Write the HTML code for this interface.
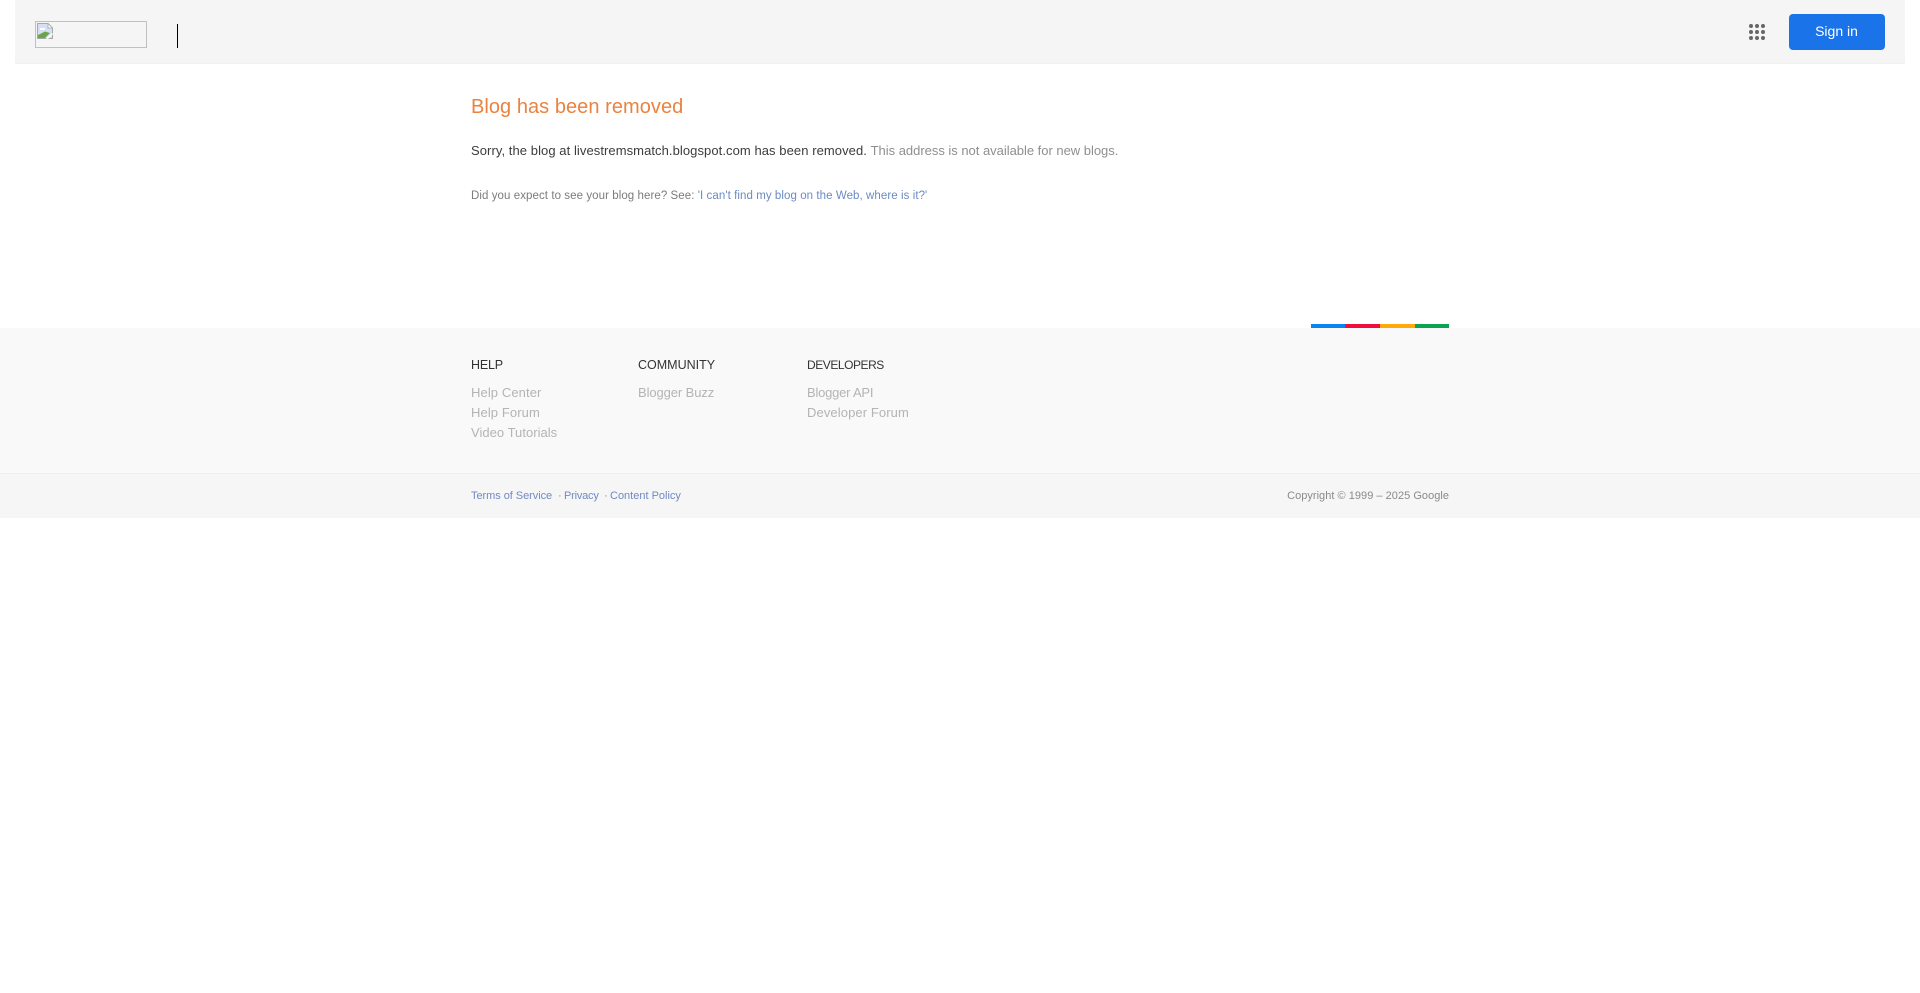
<!DOCTYPE html>
<html><head><meta charset="utf-8"><title>Blog has been removed</title>
<style>
html,body{margin:0;padding:0;background:#fff;width:1920px;height:993px;overflow:hidden}
body{font-family:"Liberation Sans",sans-serif;position:relative}
.b{position:absolute}
.t{position:absolute;white-space:pre;line-height:20px;height:20px}
.t a{color:inherit;text-decoration:none}
.h{font-size:12.500px;color:#333;top:355px}
.l{font-size:13px;color:#b4b4b4}
.s{font-size:11px;top:486px;color:#6f8ac4}
</style></head><body>
<div class="b" style="left:15px;top:0;width:1890px;height:63px;background:#f5f5f5;border-bottom:1px solid #f0f0f0"></div>
<div class="b" style="left:35px;top:21px;width:110px;height:25px;border:1px solid #c0c0c0"></div>
<svg class="b" style="left:37px;top:23px" width="16" height="16" viewBox="0 0 16 16">
<path d="M0.5 .5H11L15.5 5V15.5H.5Z" fill="#d5e0f5" stroke="#a8a8a8" stroke-width="1"/>
<path d="M11 .5V5H15.5Z" fill="#fff" stroke="#a8a8a8" stroke-width=".8"/>
<path d="M1 15V12L8 8.500L13 10L8 15Z" fill="#6aa548"/>
<path d="M9 15.500L15 10L16 11L11 16Z" fill="#fff"/>
<path d="M3 5h5v2h-5z" fill="#fff"/>
</svg>
<div class="b" style="left:177px;top:24px;width:1px;height:24px;background:#000"></div>
<svg class="b" style="left:1749px;top:24px" width="16" height="16" viewBox="0 0 16 16" fill="#666">
<circle cx="2" cy="2" r="2"/><circle cx="8" cy="2" r="2"/><circle cx="14" cy="2" r="2"/>
<circle cx="2" cy="8" r="2"/><circle cx="8" cy="8" r="2"/><circle cx="14" cy="8" r="2"/>
<circle cx="2" cy="14" r="2"/><circle cx="8" cy="14" r="2"/><circle cx="14" cy="14" r="2"/>
</svg>
<div class="b" style="left:1789px;top:14px;width:96px;height:36px;background:#1a73e8;border-radius:4px;color:#fff;font-size:14px;line-height:35px;text-align:center;text-indent:-1px">Sign in</div>

<div class="t" style="left:471px;top:96px;font-size:20px;line-height:22px;height:24px;color:#ea8340;letter-spacing:.05px">Blog has been removed</div>
<div class="t" style="left:471px;top:141px;font-size:13px;color:#3c3c3c;letter-spacing:.07px">Sorry, the blog at livestremsmatch.blogspot.com has been removed. <span style="color:#8f8f8f;letter-spacing:-.02px">This address is not available for new blogs.</span></div>
<div class="t" style="left:471px;top:186px;font-size:11.500px;color:#7c7c7c;letter-spacing:.07px">Did you expect to see your blog here? See: <a style="color:#6a8bc2" href="#">'I can't find my blog on the Web, where is it?'</a></div>

<div class="b" style="left:0;top:328px;width:1920px;height:145px;background:#f9f9f9"></div>
<div class="b" style="left:1311px;top:324px;width:34px;height:4px;background:#0a84f0"></div>
<div class="b" style="left:1345px;top:324px;width:35px;height:4px;background:#f00f3c"></div>
<div class="b" style="left:1380px;top:324px;width:35px;height:4px;background:#ffa90a"></div>
<div class="b" style="left:1415px;top:324px;width:34px;height:4px;background:#0ba34f"></div>

<div class="t h" style="left:471px;letter-spacing:-.2px">HELP</div>
<div class="t h" style="left:638px">COMMUNITY</div>
<div class="t h" style="left:807px;font-size:12px;letter-spacing:-.45px">DEVELOPERS</div>
<div class="t l" style="left:471px;top:383px;letter-spacing:.1px">Help Center</div>
<div class="t l" style="left:471px;top:403px;letter-spacing:.1px">Help Forum</div>
<div class="t l" style="left:471px;top:423px;letter-spacing:.03px">Video Tutorials</div>
<div class="t l" style="left:638px;top:383px;letter-spacing:-.1px">Blogger Buzz</div>
<div class="t l" style="left:807px;top:383px;letter-spacing:-.22px">Blogger API</div>
<div class="t l" style="left:807px;top:403px;letter-spacing:.1px">Developer Forum</div>

<div class="b" style="left:0;top:473px;width:1920px;height:44px;background:#f6f6f6;border-top:1px solid #eeeeee"></div>
<div class="t s" style="left:471px;letter-spacing:-.05px">Terms of Service</div>
<div class="t s" style="left:558px;color:#888">·</div>
<div class="t s" style="left:564px;letter-spacing:-.2px">Privacy</div>
<div class="t s" style="left:604px;color:#888">·</div>
<div class="t s" style="left:610px">Content Policy</div>
<div class="t s" style="right:471px;color:#8a8a8a;letter-spacing:.03px">Copyright © 1999 – 2025 Google</div>
</body></html>
